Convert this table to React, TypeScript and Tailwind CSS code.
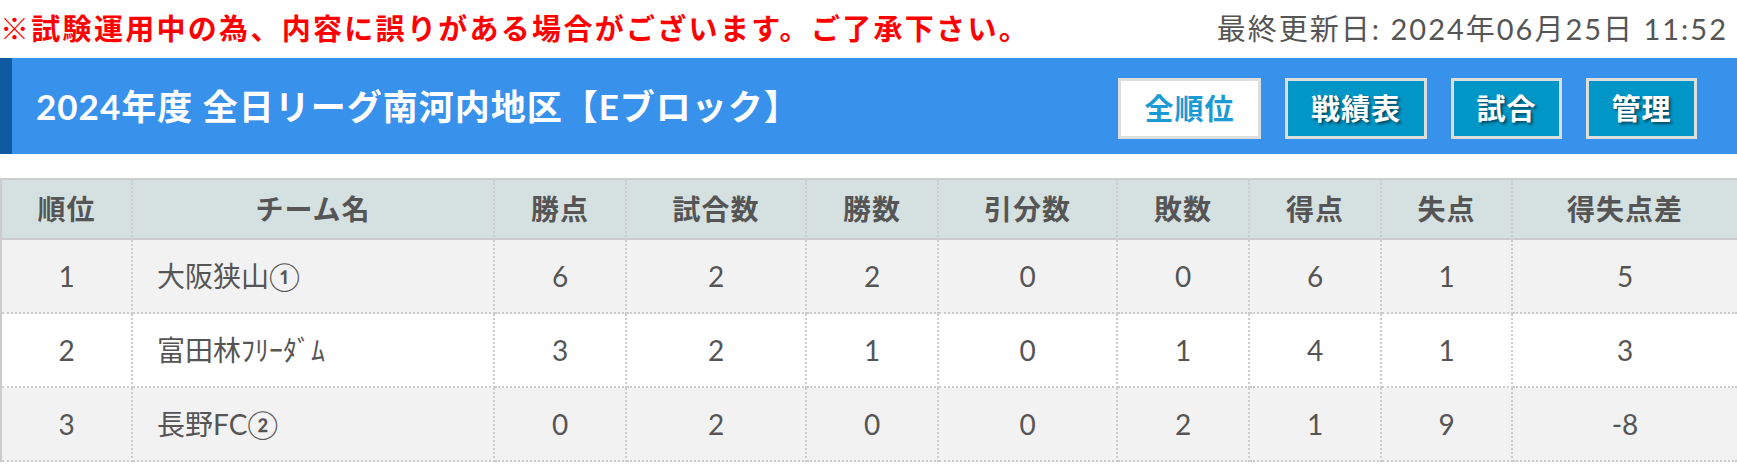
const rows = [
  { rank: 1, name: "大阪狭山①", pts: 6, games: 2, win: 2, draw: 0, lose: 0, gf: 6, ga: 1, diff: 5 },
  { rank: 2, name: "富田林ﾌﾘｰﾀﾞﾑ", pts: 3, games: 2, win: 1, draw: 0, lose: 1, gf: 4, ga: 1, diff: 3 },
  { rank: 3, name: "長野FC②", pts: 0, games: 2, win: 0, draw: 0, lose: 2, gf: 1, ga: 9, diff: -8 },
];

const heads = ["順位", "チーム名", "勝点", "試合数", "勝数", "引分数", "敗数", "得点", "失点", "得失点差"];
const widths = [133, 362, 132, 180, 132, 179, 132, 132, 131];

const buttons = [
  { label: "全順位", w: "w-[143px]", active: true },
  { label: "戦績表", w: "w-[142px]", active: false },
  { label: "試合", w: "w-[111px]", active: false },
  { label: "管理", w: "w-[111px]", active: false },
];

export default function App() {
  return (
    <div className="bg-white font-['Lato','Noto_Sans_CJK_JP',sans-serif] text-[#555]">
      <div className="flex h-[58px] items-center justify-between pr-[9px]">
        <p className="text-[29px] font-bold tracking-[2.3px] text-[#ff0000]">
          ※試験運用中の為、内容に誤りがある場合がございます。ご了承下さい。
        </p>
        <p className="text-[29px] tracking-[2px] text-[#555]">最終更新日: 2024年06月25日 11:52</p>
      </div>

      <div className="flex h-[96px] items-center justify-between border-l-[12px] border-[#0f5aa0] bg-[#3891eb] pl-[24px] pr-[40px]">
        <h1 className="text-[35px] font-bold tracking-[1px] text-white">2024年度 全日リーグ南河内地区【Eブロック】</h1>
        <div className="mt-[5px] flex gap-[24px]">
          {buttons.map((b) => (
            <div
              key={b.label}
              className={`${b.w} flex h-[61px] items-center justify-center border-[3px] border-[#dddddd] text-[29px] font-bold tracking-[1px] ${
                b.active
                  ? "bg-white text-[#1b9ad3]"
                  : "bg-[#0097c8] text-white [text-shadow:2px_2px_3px_rgba(0,0,0,0.55)]"
              }`}
            >
              {b.label}
            </div>
          ))}
        </div>
      </div>

      <div className="mt-[24px] border-l-2 border-t-2 border-[#cccccc]">
        <table className="w-full table-fixed border-separate border-spacing-0">
          <colgroup>
            {widths.map((w, i) => (
              <col key={i} style={{ width: i === 0 ? w - 2 : w }} />
            ))}
            <col />
          </colgroup>
          <thead>
            <tr>
              {heads.map((h, i) => (
                <th
                  key={h}
                  className={`h-[60px] border-b-2 border-solid border-b-[#cccccc] bg-[#d5e0e0] text-center text-[28px] font-bold tracking-[1px] text-[#555] ${
                    i < heads.length - 1 ? "border-r-2 border-r-[#cccccc] [border-right-style:dotted]" : ""
                  }`}
                >
                  {h}
                </th>
              ))}
            </tr>
          </thead>
          <tbody>
            {rows.map((r, ri) => {
              const cells = [r.rank, r.name, r.pts, r.games, r.win, r.draw, r.lose, r.gf, r.ga, r.diff];
              return (
                <tr key={r.rank} className={ri % 2 === 0 ? "bg-[#f2f2f2]" : "bg-white"}>
                  {cells.map((c, i) => (
                    <td
                      key={i}
                      className={`h-[74px] border-b-2 border-dotted border-b-[#cccccc] text-[28px] text-[#555] ${
                        i === 1 ? "pl-[24px] text-left" : "text-center"
                      } ${i < cells.length - 1 ? "border-r-2 border-r-[#cccccc]" : ""}`}
                    >
                      {c}
                    </td>
                  ))}
                </tr>
              );
            })}
          </tbody>
        </table>
      </div>
    </div>
  );
}
